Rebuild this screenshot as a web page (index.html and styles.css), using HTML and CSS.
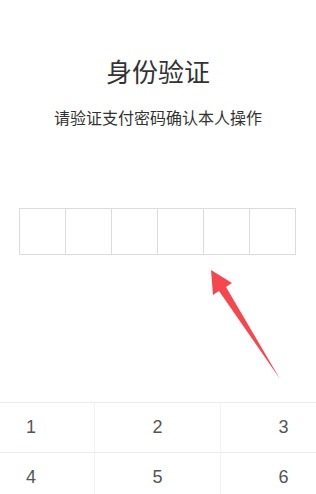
FILE: index.html
```html
<!DOCTYPE html>
<html lang="zh-CN">
<head>
<meta charset="utf-8">
<title>身份验证</title>
<link rel="stylesheet" href="styles.css">
</head>
<body>
<div class="page">
  <h1 class="title">身份验证</h1>
  <p class="subtitle">请验证支付密码确认本人操作</p>
  <div class="pin">
    <div class="cell"></div>
    <div class="cell"></div>
    <div class="cell"></div>
    <div class="cell"></div>
    <div class="cell"></div>
    <div class="cell"></div>
  </div>
  <svg class="arrow" width="90" height="125" viewBox="200 260 90 125" aria-hidden="true">
    <polygon points="211,270 232,283 226,287 280,379 219,291 213,295" fill="#f4484e"/>
  </svg>
  <div class="keypad">
    <div class="key key-left">1</div>
    <div class="key">2</div>
    <div class="key key-right">3</div>
    <div class="key key-left">4</div>
    <div class="key">5</div>
    <div class="key key-right">6</div>
  </div>
</div>
</body>
</html>
```
FILE: styles.css
```css
html, body {
  margin: 0;
  padding: 0;
  background: #ffffff;
}
body {
  width: 316px;
  height: 494px;
  overflow: hidden;
  font-family: "Noto Sans CJK SC", "Liberation Sans", sans-serif;
}
.page {
  position: relative;
  width: 316px;
  height: 494px;
  display: flex;
  flex-direction: column;
  align-items: center;
}
.title {
  margin: 53px 0 0;
  font-size: 26px;
  line-height: 36px;
  font-weight: normal;
  color: #333333;
}
.subtitle {
  margin: 17px 0 0;
  font-size: 16px;
  line-height: 22px;
  color: #333333;
}
.pin {
  margin: 80px 0 0 -1px;
  display: flex;
  border: 1px solid #dcdcdc;
}
.cell {
  width: 45px;
  height: 45px;
  border-left: 1px solid #dcdcdc;
}
.cell:first-child {
  border-left: none;
}
.arrow {
  position: absolute;
  left: 200px;
  top: 260px;
}
.keypad {
  margin-top: 147px;
  align-self: stretch;
  display: grid;
  grid-template-columns: 94px 126px 96px;
  border-top: 1px solid #ececec;
}
.key {
  height: 49px;
  display: flex;
  align-items: center;
  justify-content: center;
  font-family: "Liberation Sans", Arial, sans-serif;
  font-size: 18px;
  color: #555555;
  border-bottom: 1px solid #ececec;
  border-left: 1px solid #f2f2f2;
}
.key-left {
  border-left: none;
  padding-right: 32px;
}
.key-right {
  padding-left: 30px;
}
```
